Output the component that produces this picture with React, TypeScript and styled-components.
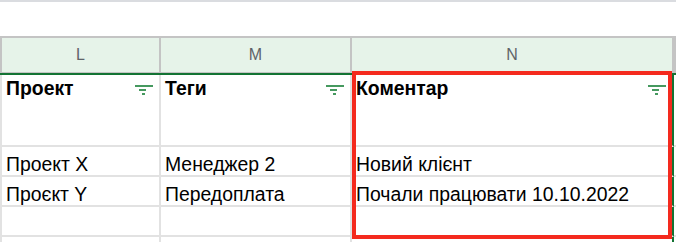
import { Fragment } from "react";
import styled, { createGlobalStyle } from "styled-components";

const GlobalStyle = createGlobalStyle`
  html, body {
    margin: 0;
    padding: 0;
    background: #ffffff;
  }
  body {
    font-family: "Liberation Sans", Arial, sans-serif;
    overflow: hidden;
  }
`;

const GRID_COLUMNS = "159px 191px 322px 1fr";

const Page = styled.div`
  width: 676px;
  height: 242px;
  overflow: hidden;
`;

const TopRule = styled.div`
  height: 2px;
  background: #dadce0;
  margin-bottom: 34px;
`;

const Sheet = styled.div`
  position: relative;
`;

const Headings = styled.div`
  border-bottom: 2px solid #137333;
`;

const HeadingRow = styled.div`
  display: grid;
  grid-template-columns: ${GRID_COLUMNS};
  border-top: 2px solid #c4c4c4;
  border-left: 2px solid #c4c4c4;
  border-bottom: 1px solid #c4c4c4;
`;

const ColumnLetter = styled.div`
  height: 34px;
  display: flex;
  align-items: center;
  justify-content: center;
  background: #e6f3e9;
  border-right: 2px solid #c4c4c4;
  color: #5f6368;
  font-size: 16px;
`;

const Body = styled.div`
  display: grid;
  grid-template-columns: ${GRID_COLUMNS};
  grid-template-rows: 72px repeat(4, 30px);
  border-left: 2px solid #e2e2e2;
`;

const Cell = styled.div<{ $selected?: boolean; $head?: boolean }>`
  box-sizing: border-box;
  display: flex;
  justify-content: space-between;
  align-items: ${(p) => (p.$head ? "flex-start" : "flex-end")};
  padding: ${(p) => (p.$head ? "2px 6px 0 4px" : "0 6px 0 4px")};
  border-right: 2px solid ${(p) => (p.$selected ? "#137333" : "#e2e2e2")};
  border-bottom: 2px solid #e2e2e2;
  font-size: 19.4px;
  line-height: 22px;
  font-weight: ${(p) => (p.$head ? 700 : 400)};
  color: #000000;
  white-space: nowrap;
  overflow: hidden;
`;

const FilterIcon = styled.svg`
  flex: none;
  margin-top: 8px;
`;

const Highlight = styled.div`
  position: absolute;
  left: 352px;
  top: 35px;
  width: 320px;
  height: 168px;
  box-sizing: border-box;
  border: 4px solid #f42a1e;
  pointer-events: none;
`;

function Filter() {
  return (
    <FilterIcon width="18" height="11" viewBox="0 0 18 11">
      <g stroke="#188038" strokeWidth="1.6">
        <line x1="0" y1="1" x2="18" y2="1" />
        <line x1="4" y1="5" x2="11" y2="5" />
        <line x1="7" y1="9" x2="10" y2="9" />
      </g>
    </FilterIcon>
  );
}

const letters = ["L", "M", "N", ""];
const headers = ["Проект", "Теги", "Коментар"];
const rows = [
  ["Проект X", "Менеджер 2", "Новий клієнт"],
  ["Проєкт Y", "Передоплата", "Почали працювати 10.10.2022"],
  ["", "", ""],
  ["", "", ""],
];

export default function App() {
  return (
    <Page>
      <GlobalStyle />
      <TopRule />
      <Sheet>
        <Headings>
          <HeadingRow>
            {letters.map((l, i) => (
              <ColumnLetter key={i}>{l}</ColumnLetter>
            ))}
          </HeadingRow>
        </Headings>
        <Body>
          {headers.map((h, i) => (
            <Cell key={h} $head $selected={i === 2}>
              <span>{h}</span>
              <Filter />
            </Cell>
          ))}
          <Cell $head />
          {rows.map((r, ri) => (
            <Fragment key={ri}>
              {r.map((v, ci) => (
                <Cell key={ci} $selected={ci === 2}>
                  {v}
                </Cell>
              ))}
              <Cell />
            </Fragment>
          ))}
        </Body>
        <Highlight />
      </Sheet>
    </Page>
  );
}
